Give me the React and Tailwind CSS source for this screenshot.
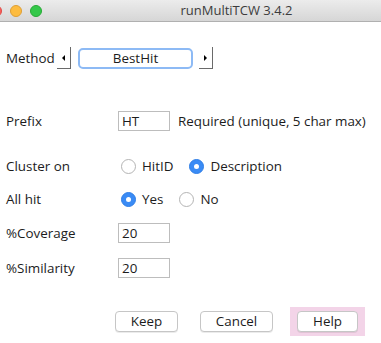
import React from "react"

function Radio({ checked, label }) {
  return (
    <div className="flex items-center">
      {checked ? (
        <span className="w-[15px] h-[15px] rounded-full bg-[#3a8bf5] border border-[#2f7ee6] flex items-center justify-center">
          <span className="w-[5px] h-[5px] rounded-full bg-white"></span>
        </span>
      ) : (
        <span className="w-[15px] h-[15px] rounded-full bg-white border border-[#b4b4b4]"></span>
      )}
      <span className="ml-[6px]">{label}</span>
    </div>
  )
}

function Field({ value }) {
  return (
    <div className="w-[52px] h-[20px] border border-[#bdbdbd] bg-white flex items-center pl-[3px]">{value}</div>
  )
}

function Btn({ children, w }) {
  return (
    <div
      className={`h-[21px] ${w} bg-white border border-[#c6c6c6] rounded-[4px] shadow-[0_1px_0_rgba(0,0,0,0.08)] flex items-center justify-center`}
    >
      {children}
    </div>
  )
}

export default function App() {
  return (
    <div
      className="w-[381px] h-[343px] bg-white text-[13.4px] text-[#1c1c1c] overflow-hidden"
      style={{ fontFamily: '"Open Sans", "DejaVu Sans", sans-serif' }}
    >
      {/* Title bar */}
      <div className="relative h-[22px] bg-gradient-to-b from-[#ececec] to-[#d6d6d6] border-b border-[#b0b0b0] flex items-center text-[13px]">
        <span className="absolute left-[-10px] top-[5px] w-[12px] h-[12px] rounded-full bg-[#fc605c] border border-[#de4a46]"></span>
        <span className="absolute left-[10px] top-[5px] w-[12px] h-[12px] rounded-full bg-[#fdbc40] border border-[#de9f34]"></span>
        <span className="absolute left-[30px] top-[5px] w-[12px] h-[12px] rounded-full bg-[#34c84a] border border-[#27aa35]"></span>
        <span className="w-full pl-[92px] text-center text-[#3c3c3c]">runMultiTCW 3.4.2</span>
      </div>

      {/* Method */}
      <div className="flex items-center h-[22px] mt-[25px] pl-[6px]">
        <span className="w-[51px]">Method</span>
        <div className="w-[14px] h-[22px] border-r border-b border-[#6a6a6a] flex items-center justify-center">
          <span className="w-0 h-0 border-y-[3px] border-y-transparent border-r-[3px] border-r-black"></span>
        </div>
        <div className="ml-[7px] w-[115px] h-[21px] rounded-[5px] border-[2px] border-[#8dbaf5] flex items-center justify-center">
          BestHit
        </div>
        <div className="ml-[6px] w-[14px] h-[22px] border-r border-b border-[#6a6a6a] flex items-center justify-center">
          <span className="w-0 h-0 border-y-[3px] border-y-transparent border-l-[3px] border-l-black"></span>
        </div>
      </div>

      {/* Prefix */}
      <div className="flex items-center h-[20px] mt-[42px] pl-[6px]">
        <span className="w-[112px]">Prefix</span>
        <Field value="HT" />
        <span className="ml-[8px]">Required (unique, 5 char max)</span>
      </div>

      {/* Cluster on */}
      <div className="flex items-center h-[20px] mt-[25px] pl-[6px]">
        <span className="w-[115px]">Cluster on</span>
        <Radio label="HitID" />
        <div className="ml-[16px]">
          <Radio checked label="Description" />
        </div>
      </div>

      {/* All hit */}
      <div className="flex items-center h-[20px] mt-[13px] pl-[6px]">
        <span className="w-[115px]">All hit</span>
        <Radio checked label="Yes" />
        <div className="ml-[16px]">
          <Radio label="No" />
        </div>
      </div>

      {/* Coverage */}
      <div className="flex items-center h-[20px] mt-[14px] pl-[6px]">
        <span className="w-[112px]">%Coverage</span>
        <Field value="20" />
      </div>

      {/* Similarity */}
      <div className="flex items-center h-[20px] mt-[15px] pl-[6px]">
        <span className="w-[112px]">%Similarity</span>
        <Field value="20" />
      </div>

      {/* Buttons */}
      <div className="flex items-center h-[29px] mt-[29px] pl-[115px]">
        <Btn w="w-[63px]">Keep</Btn>
        <div className="ml-[22px]">
          <Btn w="w-[73px]">Cancel</Btn>
        </div>
        <div className="ml-[17px] h-[29px] w-[75px] bg-[#f3d4e8] flex items-center justify-center">
          <Btn w="w-[61px]">Help</Btn>
        </div>
      </div>
    </div>
  )
}
